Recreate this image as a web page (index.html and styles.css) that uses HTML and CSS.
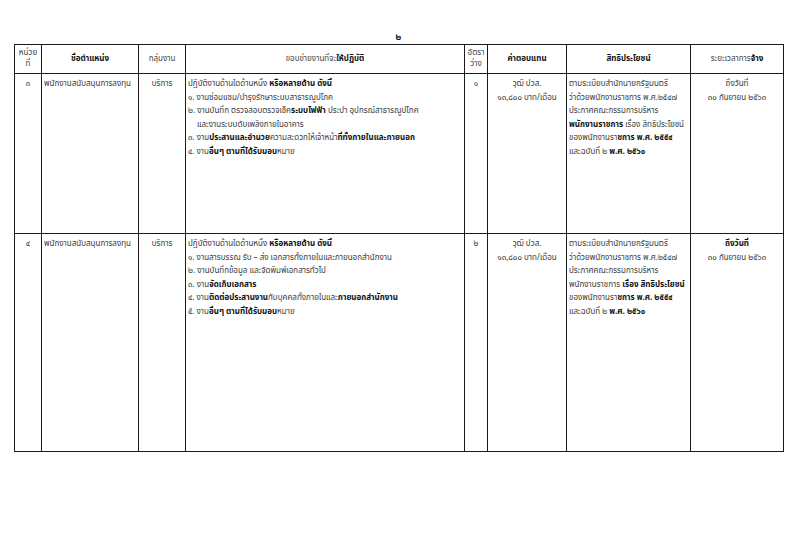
FILE: index.html
```html
<!DOCTYPE html>
<html lang="th">
<head>
<meta charset="utf-8">
<link rel="stylesheet" href="styles.css">
</head>
<body>
<div class="page">
  <div class="pageno">๒</div>
  <table class="grid">
    <colgroup>
      <col class="c1"><col class="c2"><col class="c3"><col class="c4"><col class="c5"><col class="c6"><col class="c7"><col class="c8">
    </colgroup>
    <thead>
      <tr class="head">
        <th class="thin">หน่วย<br>ที่</th>
        <th><b>ชื่อตำแหน่ง</b></th>
        <th class="thin">กลุ่มงาน</th>
        <th class="thin">ขอบข่ายงานที่จะ<b>ให้ปฏิบัติ</b></th>
        <th class="thin">อัตรา<br>ว่าง</th>
        <th><b>ค่าตอบแทน</b></th>
        <th><b>สิทธิประโยชน์</b></th>
        <th class="thin">ระยะเวลาการ<b>จ้าง</b></th>
      </tr>
    </thead>
    <tbody>
      <tr class="row1">
        <td class="ctr">๓</td>
        <td>พนักงานสนับสนุนการลงทุน</td>
        <td class="ctr">บริการ</td>
        <td>
          <div class="ln">ปฏิบัติงานด้านใดด้านหนึ่ง <b>หรือหลายด้าน ดังนี้</b></div>
          <div class="ln">๑. งานซ่อมแซม/บำรุงรักษาระบบสาธารณูปโภค</div>
          <div class="ln">๒. งานบันทึก ตรวจสอบตรวจเช็ค<b>ระบบไฟฟ้า</b> ประปา อุปกรณ์สาธารณูปโภค</div>
          <div class="ln ind">และงานระบบดับเพลิงภายในอาคาร</div>
          <div class="ln">๓. งาน<b>ประสานและอำนวย</b>ความสะดวกให้เจ้าหน้า<b>ที่ทั้งภายในและภายนอก</b></div>
          <div class="ln">๔. งาน<b>อื่นๆ ตามที่ได้รับมอบ</b>หมาย</div>
        </td>
        <td class="ctr">๑</td>
        <td class="ctr">
          <div class="ln">วุฒิ ปวส.</div>
          <div class="ln">๑๓,๘๐๐ บาท/เดือน</div>
        </td>
        <td>
          <div class="ln">ตามระเบียบสำนักนายกรัฐมนตรี</div>
          <div class="ln">ว่าด้วยพนักงานราชการ พ.ศ.๒๕๔๗</div>
          <div class="ln">ประกาศคณะกรรมการบริหาร</div>
          <div class="ln"><b>พนักงานราชการ</b> เรื่อง สิทธิประโยชน์</div>
          <div class="ln">ของพนักงานรา<b>ชการ พ.ศ. ๒๕๕๔</b></div>
          <div class="ln">และฉบับที่ ๒ <b>พ.ศ. ๒๕๖๐</b></div>
        </td>
        <td class="ctr">
          <div class="ln">ถึงวันที่</div>
          <div class="ln">๓๐ กันยายน ๒๕๖๓</div>
        </td>
      </tr>
      <tr class="row2">
        <td class="ctr">๔</td>
        <td>พนักงานสนับสนุนการลงทุน</td>
        <td class="ctr">บริการ</td>
        <td>
          <div class="ln">ปฏิบัติงานด้านใดด้านหนึ่ง <b>หรือหลายด้าน ดังนี้</b></div>
          <div class="ln">๑. งานสารบรรณ รับ – ส่ง เอกสารทั้งภายในและภายนอกสำนักงาน</div>
          <div class="ln">๒. งานบันทึกข้อมูล และจัดพิมพ์เอกสารทั่วไป</div>
          <div class="ln">๓. งาน<b>จัดเก็บเอกสาร</b></div>
          <div class="ln">๔. งาน<b>ติดต่อประสานงาน</b>กับบุคคลทั้งภายในและ<b>ภายนอกสำนักงาน</b></div>
          <div class="ln">๕. งาน<b>อื่นๆ ตามที่ได้รับมอบ</b>หมาย</div>
        </td>
        <td class="ctr">๒</td>
        <td class="ctr">
          <div class="ln">วุฒิ ปวส.</div>
          <div class="ln">๑๓,๘๐๐ บาท/เดือน</div>
        </td>
        <td>
          <div class="ln">ตามระเบียบสำนักนายกรัฐมนตรี</div>
          <div class="ln">ว่าด้วยพนักงานราชการ พ.ศ.๒๕๔๗</div>
          <div class="ln">ประกาศคณะกรรมการบริหาร</div>
          <div class="ln">พนักงานราชการ <b>เรื่อง สิทธิประโยชน์</b></div>
          <div class="ln">ของพนักงานรา<b>ชการ พ.ศ. ๒๕๕๔</b></div>
          <div class="ln">และฉบับที่ ๒ <b>พ.ศ. ๒๕๖๐</b></div>
        </td>
        <td class="ctr">
          <div class="ln"><b>ถึงวันที่</b></div>
          <div class="ln">๓๐ กันยายน ๒๕๖๓</div>
        </td>
      </tr>
    </tbody>
  </table>
</div>
</body>
</html>
```

FILE: styles.css
```css
html, body {
  margin: 0;
  padding: 0;
  background: #ffffff;
}
.page {
  width: 800px;
  height: 560px;
  padding: 30px 0 0 14px;
  box-sizing: border-box;
  font-family: "Noto Sans Thai", "Loma", "Garuda", "Tlwg Typo", "Laksaman", "Noto Sans", sans-serif;
  color: #3a3a3a;
  font-size: 8px;
}
.pageno {
  width: 769px;
  height: 14px;
  text-align: center;
  font-size: 9px;
  font-weight: bold;
  color: #111;
  line-height: 14px;
}
.grid {
  table-layout: fixed;
  border-collapse: collapse;
  width: 769px;
}
.c1 { width: 27px; }
.c2 { width: 97px; }
.c3 { width: 47px; }
.c4 { width: 279px; }
.c5 { width: 23px; }
.c6 { width: 79px; }
.c7 { width: 124px; }
.c8 { width: 93px; }
.grid th, .grid td {
  border: 1px solid #1a1a1a;
  padding: 0 2px;
  vertical-align: top;
  white-space: nowrap;
  overflow: hidden;
}
.grid th {
  height: 28px;
  vertical-align: middle;
  text-align: center;
  font-weight: normal;
  line-height: 11px;
}
.grid b {
  color: #111;
  font-weight: bold;
}
.thin { color: #444; }
.row1 td { height: 155px; padding-top: 4px; }
.row2 td { height: 213px; padding-top: 4px; }
.ctr { text-align: center; }
.ln { line-height: 13.6px; }
.ind { padding-left: 9px; }
```
